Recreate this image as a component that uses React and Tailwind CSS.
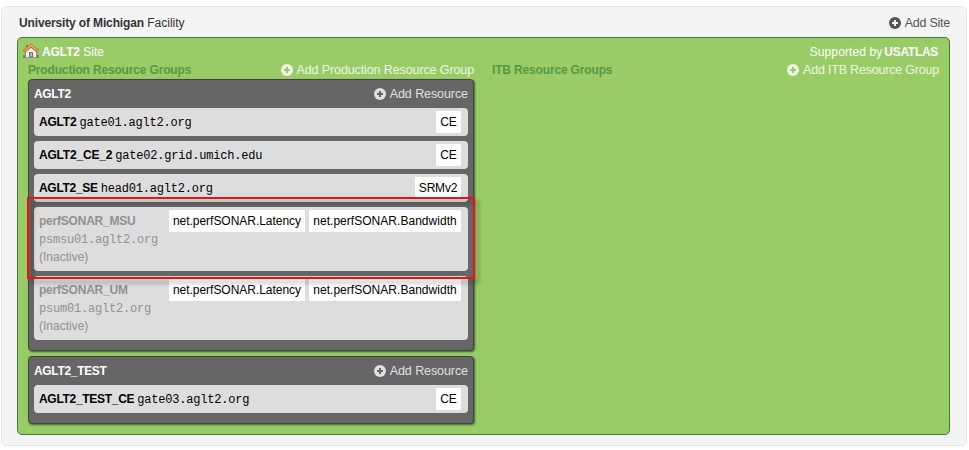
const sans = "font-['Liberation_Sans',Arial,sans-serif]";
const mono = "font-['Liberation_Mono','Courier_New',monospace] tracking-[-0.2px]";

function AddLink({ children, color = "text-[#e0e0e0]", hole = "#666", tracking = "tracking-[-0.08px]" }) {
  return (
    <a className={`flex h-[18px] items-center gap-1 whitespace-nowrap text-[12.5px] leading-[18px] ${color}`}>
      <svg width="12" height="12" viewBox="0 0 12 12" className="shrink-0">
        <circle cx="6" cy="6" r="6" fill="currentColor" />
        <path d="M5 3h2v2h2v2H7v2H5V7H3V5h2z" fill={hole} />
      </svg>
      <span className={tracking}>{children}</span>
    </a>
  );
}

function Service({ children, size = "w-auto", tracking = "tracking-[0px]" }) {
  return <span className={`flex h-[22px] items-center justify-center whitespace-nowrap bg-white text-black ${size} ${tracking}`}>{children}</span>;
}

function Resource({ name, host, service, nameTracking = "tracking-[-0.3px]", size = "w-[25px]", serviceTracking = "tracking-[-0.2px]" }) {
  return (
    <div className="flex h-7 items-center justify-between rounded bg-[#ddd] pl-[5px] pr-[7px] text-black">
      <div className="flex items-baseline gap-[3px] leading-[18px]">
        <b className={nameTracking}>{name}</b>
        <span className={mono}>{host}</span>
      </div>
      <Service size={size} tracking={serviceTracking}>{service}</Service>
    </div>
  );
}

function InactiveResource({ name, host }) {
  return (
    <div className="flex h-16 items-start justify-between rounded bg-[#ddd] pl-[5px] pr-[7px] pt-[3px]">
      <div className="flex flex-col pt-[2px] leading-[18px] text-[#919191]">
        <b className="h-[19px] tracking-[-0.22px]">{name}</b>
        <span className={`h-[17px] ${mono}`}>{host}</span>
        <span>(Inactive)</span>
      </div>
      <div className="flex gap-1">
        <Service size="w-[136px]" tracking="tracking-[-0.03px]">net.perfSONAR.Latency</Service>
        <Service size="w-[152px]" tracking="tracking-[0.03px]">net.perfSONAR.Bandwidth</Service>
      </div>
    </div>
  );
}

function Group({ name, height, children }) {
  return (
    <section className={`${height} rounded border border-[#444] bg-[#666] px-[5px] pt-[5px] shadow-[1px_1px_2px_#336633]`}>
      <header className="flex h-[23px] items-start justify-between text-white">
        <b className="leading-[18px] tracking-[-0.33px]">{name}</b>
        <AddLink>Add Resource</AddLink>
      </header>
      <div className="flex flex-col gap-[5px]">{children}</div>
    </section>
  );
}

function House() {
  return (
    <svg width="16" height="16" viewBox="0 0 16 16">
      <path d="M0 12h4v3H0zM12 12h4v3h-4z" fill="#4f9a35" />
      <path d="M2.5 7.5 8 3l5.5 4.500V14.500h-11z" fill="#f3f1eb" stroke="#99938a" />
      <path d="M3 2h2v3H3z" fill="#b66532" />
      <path d="M1 8.500 8 2.500l7 6" fill="none" stroke="#a75f25" strokeWidth="3.200" />
      <path d="M1.200 8.200 8 2.300l6.800 5.900" fill="none" stroke="#e7a360" strokeWidth="1.800" />
      <path d="M6.500 14V9.500h3V14z" fill="#b4b8bf" stroke="#666a73" />
    </svg>
  );
}

export default function App() {
  return (
    <main className={`h-[450px] w-[969px] overflow-hidden bg-white pl-px pt-[6px] text-[12px] ${sans}`}>
      <div className="h-[440px] w-[966px] rounded-[5px] border border-[#e5e5e5] bg-[#f4f4f4] px-[15px] pt-[7px]">
        <header className="flex h-[23px] items-start justify-between pl-[2px] pr-px text-[#333]">
          <div className="leading-[18px]">
            <b className="tracking-[-0.14px]">University of Michigan</b> Facility
          </div>
          <AddLink color="text-[#555]" hole="#f4f4f4" tracking="tracking-[-0.25px]">Add Site</AddLink>
        </header>
        <div className="h-[398px] w-[933px] rounded-[5px] border border-[#3f7f35] bg-[#99cc66]">
          <div className="flex h-[22px] items-start justify-between pl-[5px] pr-[11px] pt-[5px] leading-[18px] text-white">
            <div className="flex gap-[3px]">
              <House />
              <span><b className="tracking-[-0.1px]">AGLT2</b> Site</span>
            </div>
            <div className="flex gap-[2px]">
              <span className="tracking-[0.1px]">Supported by</span>
              <b className="tracking-[-0.3px]">USATLAS</b>
            </div>
          </div>
          <div className="flex gap-[18px] pl-[10px]">
            <div className="w-[446px]">
              <div className="flex h-[19px] items-end justify-between text-[#559944]">
                <b className="leading-[18px] tracking-[-0.16px]">Production Resource Groups</b>
                <AddLink color="text-[#edf7e3]" hole="#99cc66" tracking="tracking-[-0.11px]">Add Production Resource Group</AddLink>
              </div>
              <div className="relative flex flex-col gap-[5px]">
                <Group name="AGLT2" height="h-[272px]">
                  <Resource name="AGLT2" host="gate01.aglt2.org" service="CE" nameTracking="tracking-[-0.2px]" />
                  <Resource name="AGLT2_CE_2" host="gate02.grid.umich.edu" service="CE" nameTracking="tracking-[-0.2px]" />
                  <Resource name="AGLT2_SE" host="head01.aglt2.org" service="SRMv2" size="w-[46px]" />
                  <InactiveResource name="perfSONAR_MSU" host="psmsu01.aglt2.org" />
                  <InactiveResource name="perfSONAR_UM" host="psum01.aglt2.org" />
                </Group>
                <Group name="AGLT2_TEST" height="h-[68px]">
                  <Resource name="AGLT2_TEST_CE" host="gate03.aglt2.org" service="CE" nameTracking="tracking-[-0.3px]" />
                </Group>
                <div className="absolute left-[-1px] top-[118px] h-[82px] w-[448px] border-2 border-[#ee1111] drop-shadow-[4px_4px_2px_rgba(0,0,0,0.35)]" />
              </div>
            </div>
            <div className="flex h-[19px] w-[447px] items-end justify-between text-[#559944]">
              <b className="leading-[18px] tracking-[-0.16px]">ITB Resource Groups</b>
              <AddLink color="text-[#edf7e3]" hole="#99cc66" tracking="tracking-[-0.2px]">Add ITB Resource Group</AddLink>
            </div>
          </div>
        </div>
      </div>
    </main>
  );
}
